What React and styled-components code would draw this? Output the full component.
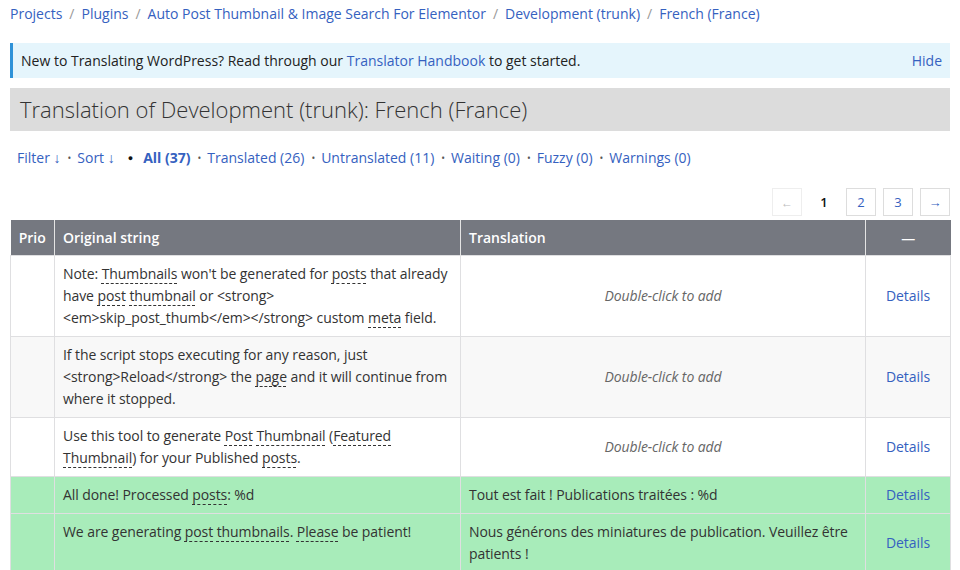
import styled, { createGlobalStyle } from "styled-components"

const GlobalStyle = createGlobalStyle`
  body {
    margin: 0;
    background: #fff;
    font-family: "Open Sans", "Noto Sans", sans-serif;
    font-size: 14px;
    color: #333;
  }
`

const crumbs = [
  "Projects",
  "Plugins",
  "Auto Post Thumbnail & Image Search For Elementor",
  "Development (trunk)",
  "French (France)",
]

const filters = [
  { label: "Translated (26)" },
  { label: "Untranslated (11)" },
  { label: "Waiting (0)" },
  { label: "Fuzzy (0)" },
  { label: "Warnings (0)" },
]

// text parts: strings are plain, { g: "word" } are glossary terms
const rows = [
  {
    original: [
      "Note: ",
      { g: "Thumbnails" },
      " won't be generated for ",
      { g: "posts" },
      " that already have ",
      { g: "post" },
      " ",
      { g: "thumbnail" },
      " or <strong><em>skip_post_thumb</em></strong> custom ",
      { g: "meta" },
      " field.",
    ],
    alt: false,
  },
  {
    original: [
      "If the script stops executing for any reason, just <strong>Reload</strong> the ",
      { g: "page" },
      " and it will continue from where it stopped.",
    ],
    alt: true,
  },
  {
    original: [
      "Use this tool to generate ",
      { g: "Post" },
      " ",
      { g: "Thumbnail" },
      " (",
      { g: "Featured" },
      " ",
      { g: "Thumbnail" },
      ") for your Published ",
      { g: "posts" },
      ".",
    ],
  },
  {
    original: ["All done! Processed ", { g: "posts" }, ": %d"],
    translation: "Tout est fait ! Publications traitées : %d",
  },
  {
    original: [
      "We are generating ",
      { g: "post" },
      " ",
      { g: "thumbnails" },
      ". ",
      { g: "Please" },
      " be patient!",
    ],
    translation: "Nous générons des miniatures de publication. Veuillez être patients !",
  },
]

function App() {
  return (
    <Page>
      <GlobalStyle />
      <Breadcrumbs>
        {crumbs.map((c, i) => (
          <span key={c}>
            {i > 0 && <Sep>/</Sep>}
            <Link>{c}</Link>
          </span>
        ))}
      </Breadcrumbs>

      <Notice>
        <span>
          New to Translating WordPress? Read through our <Link>Translator Handbook</Link> to get
          started.
        </span>
        <Link>Hide</Link>
      </Notice>

      <Title>Translation of Development (trunk): French (France)</Title>

      <FilterBar>
        <Link>Filter ↓</Link>
        <Dot>•</Dot>
        <Link>Sort ↓</Link>
        <Bullet>●</Bullet>
        <Link as="b">All (37)</Link>
        {filters.map((f) => (
          <span key={f.label}>
            <Dot>•</Dot>
            <Link>{f.label}</Link>
          </span>
        ))}
      </FilterBar>

      <Paging>
        <PageBtn disabled>←</PageBtn>
        <PageCurrent>1</PageCurrent>
        <PageBtn>2</PageBtn>
        <PageBtn>3</PageBtn>
        <PageBtn>→</PageBtn>
      </Paging>

      <Table>
        <colgroup>
          <col style={{ width: 44 }} />
          <col style={{ width: 406 }} />
          <col style={{ width: 405 }} />
          <col style={{ width: 85 }} />
        </colgroup>
        <thead>
          <tr>
            <Th center>Prio</Th>
            <Th>Original string</Th>
            <Th>Translation</Th>
            <Th center>—</Th>
          </tr>
        </thead>
        <tbody>
          {rows.map((r, i) => (
            <Row key={i} alt={r.alt} done={!!r.translation}>
              <Td top />
              <Td top>
                {r.original.map((p, j) =>
                  typeof p === "string" ? p : <Glossary key={j}>{p.g}</Glossary>
                )}
              </Td>
              {r.translation ? (
                <Td top>{r.translation}</Td>
              ) : (
                <Td center>
                  <Empty>Double-click to add</Empty>
                </Td>
              )}
              <Td center>
                <Link>Details</Link>
              </Td>
            </Row>
          ))}
        </tbody>
      </Table>
    </Page>
  )
}

const Page = styled.div`
  padding: 0 10px;
`

const Link = styled.a`
  color: #3561c0;
  text-decoration: none;
  cursor: pointer;
`

const Breadcrumbs = styled.div`
  height: 27px;
  line-height: 27px;
  font-size: 14px;
  margin-bottom: 16px;
`

const Sep = styled.span`
  color: #999;
  margin: 0 7px;
`

const Notice = styled.div`
  display: flex;
  justify-content: space-between;
  align-items: center;
  background: #e5f5fc;
  border-left: 3px solid #2f92d8;
  padding: 0 8px 0 8px;
  height: 35px;
  color: #222;
  margin-bottom: 10px;
`

const Title = styled.h2`
  margin: 0;
  background: #dcdcdc;
  font-size: 22px;
  font-weight: 300;
  color: #333;
  height: 43px;
  line-height: 43px;
  padding: 0 10px;
`

const FilterBar = styled.div`
  padding: 0 7px;
  margin-top: 15px;
  height: 24px;
  line-height: 24px;
`

const Dot = styled.span`
  color: #555;
  font-size: 10px;
  margin: 0 6px 0 7px;
  vertical-align: 1px;
`

const Bullet = styled.span`
  color: #111;
  font-size: 9px;
  margin: 0 10px 0 13px;
  vertical-align: 2px;
`

const Paging = styled.div`
  display: flex;
  justify-content: flex-end;
  align-items: center;
  gap: 7px;
  margin-top: 18px;
  margin-bottom: 4px;
`

const PageBtn = styled.span`
  display: inline-flex;
  align-items: center;
  justify-content: center;
  width: 28px;
  height: 26px;
  border: 1px solid ${(p) => (p.disabled ? "#eee" : "#ddd")};
  color: ${(p) => (p.disabled ? "#bbb" : "#3561c0")};
  font-size: ${(p) => (p.disabled ? "12px" : "13px")};
`

const PageCurrent = styled(PageBtn)`
  border-color: transparent;
  color: #111;
  font-weight: 600;
`

const Table = styled.table`
  width: 100%;
  table-layout: fixed;
  border-collapse: collapse;
  font-size: 14px;
`

const Th = styled.th`
  background: #757880;
  color: #fff;
  font-weight: 600;
  text-align: ${(p) => (p.center ? "center" : "left")};
  height: 35px;
  padding: 0 8px;
  border-left: 1px solid #e4e4e4;
  &:first-child {
    border-left: none;
  }
`

const Row = styled.tr`
  background: ${(p) => (p.done ? "#a8ecba" : p.alt ? "#f8f8f8" : "#fff")};
`

const Td = styled.td`
  border: 1px solid #dfdfe1;
  padding: 7px 8px;
  line-height: 22px;
  letter-spacing: -0.08px;
  vertical-align: ${(p) => (p.top ? "top" : "middle")};
  text-align: ${(p) => (p.center ? "center" : "left")};
`

const Glossary = styled.span`
  text-decoration: underline dashed #333;
  text-decoration-thickness: 1px;
  text-underline-offset: 4px;
`

const Empty = styled.em`
  color: #666;
`

export default App
